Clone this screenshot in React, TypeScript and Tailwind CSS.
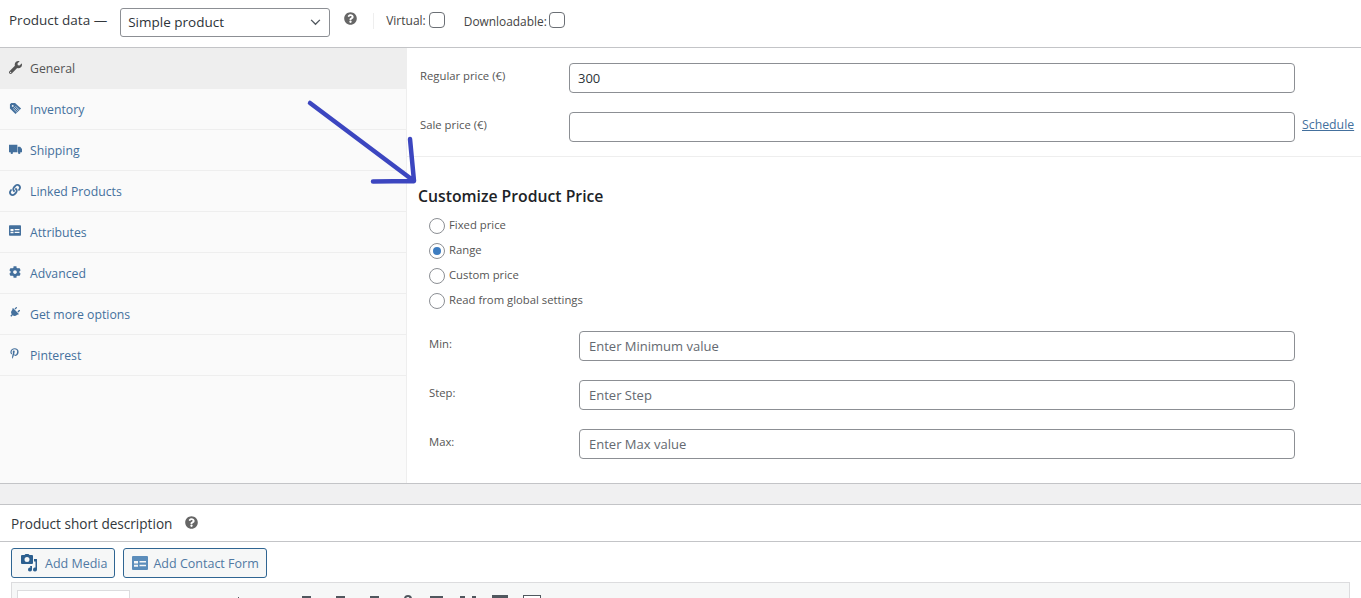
import type { ReactNode } from 'react'
import { FaWrench, FaLink, FaCog, FaPlug, FaPinterestP, FaQuestionCircle } from 'react-icons/fa'

const IdCard = ({ className = '' }: { className?: string }) => (
  <svg viewBox="0 0 16 14" className={className} fill="currentColor">
    <path fillRule="evenodd" d="M1 0h14a1 1 0 0 1 1 1v12a1 1 0 0 1-1 1H1a1 1 0 0 1-1-1V1a1 1 0 0 1 1-1zm1 3.500V12h12V3.500H2zM3 5h3.500v3H3V5zM8 5.300h5v1.400H8V5.300zM3 9.300h10v1.400H3V9.300z" />
  </svg>
)

// filled variant used by the form button and the Attributes tab
const FormIcon = ({ className = '' }: { className?: string }) => (
  <svg viewBox="0 0 16 14" className={className} fill="currentColor">
    <path fillRule="evenodd" d="M1 0h14a1 1 0 0 1 1 1v12a1 1 0 0 1-1 1H1a1 1 0 0 1-1-1V1a1 1 0 0 1 1-1zm1 5v2.500h4V5H2zm0 3.800v2h4v-2H2zM7.500 5v1.500H14V5H7.500zm0 3.800v1.500H14V8.800H7.500z" />
  </svg>
)

const TagIcon = ({ className = '' }: { className?: string }) => (
  <svg viewBox="0 0 14 14" className={className} fill="currentColor">
    <path fillRule="evenodd" d="M6.500 1L13 7l-6 6L1 7V2.500L2.500 1h4zM4 3.200a1 1 0 1 0 0 2 1 1 0 0 0 0-2z" />
    <path d="M5.500 5.500l4 4M7 4.500l4 4M4.500 7l4 4" stroke="#fafafa" strokeWidth="0.7" />
  </svg>
)

const TruckIcon = ({ className = '' }: { className?: string }) => (
  <svg viewBox="0 0 14 12" className={className} fill="currentColor">
    <path d="M0 1.500h9v8H0zM9.500 3.500h2.500l2 2.500v3.500H9.500z" />
    <circle cx="3" cy="10" r="1.300" />
    <circle cx="11" cy="10" r="1.300" />
  </svg>
)

const TABS: { label: string; icon: ReactNode; active?: boolean }[] = [
  { label: 'General', icon: <FaWrench className="w-[13px] h-[13px]" />, active: true },
  { label: 'Inventory', icon: <TagIcon className="w-[13px] h-[13px]" /> },
  { label: 'Shipping', icon: <TruckIcon className="w-[13px] h-[12px]" /> },
  { label: 'Linked Products', icon: <FaLink className="w-[12px] h-[12px]" /> },
  { label: 'Attributes', icon: <FormIcon className="w-[12px] h-[11px]" /> },
  { label: 'Advanced', icon: <FaCog className="w-[12px] h-[12px]" /> },
  { label: 'Get more options', icon: <FaPlug className="w-[11px] h-[11px] rotate-45" /> },
  { label: 'Pinterest', icon: <FaPinterestP className="w-[11px] h-[11px]" /> },
]

const RADIOS = ['Fixed price', 'Range', 'Custom price', 'Read from global settings']

function SideTab({ label, icon, active }: { label: string; icon: ReactNode; active?: boolean }) {
  return (
    <div
      className={`h-[41px] flex items-start border-b ${
        active ? 'bg-[#eeeeee] text-[#555555] border-[#eeeeee]' : 'text-[#44709d] border-[#eeeeee]'
      }`}
    >
      <span className="w-[30px] pl-[9px] pt-[13px] flex">{icon}</span>
      <span className="pt-[12px] text-[12.250px] leading-[17px]">{label}</span>
    </div>
  )
}

function PriceRow({ label, value, link }: { label: string; value?: string; link?: boolean }) {
  return (
    <div className="flex h-[30px] items-start">
      <span className="w-[149px] pt-[5px] text-[11.300px] leading-[16px] text-[#555555]">{label}</span>
      <div className="w-[726px] h-[30px] border border-[#8c8f94] rounded-[4px] px-2 pt-[1px] flex items-center text-[13px] text-[#2c3338]">
        {value}
      </div>
      {link && <a className="ml-[7px] pt-[4px] text-[12.300px] leading-[17px] text-[#44709d] underline">Schedule</a>}
    </div>
  )
}

function RangeRow({ label, placeholder }: { label: string; placeholder: string }) {
  return (
    <div className="flex h-[30px] items-start">
      <span className="w-[150px] pt-[5px] text-[11.300px] leading-[16px] text-[#555555]">{label}</span>
      <div className="w-[716px] h-[30px] border border-[#8c8f94] rounded-[4px] px-[9px] pt-[1px] flex items-center text-[13px] text-[#646970]">
        {placeholder}
      </div>
    </div>
  )
}

function Radio({ label, checked }: { label: string; checked?: boolean }) {
  return (
    <div className="h-[25px] flex items-start">
      <span className="w-4 h-4 mt-[1px] rounded-full border border-[#8c8f94] flex items-center justify-center">
        {checked && <span className="w-2 h-2 rounded-full bg-[#3d7cc0]" />}
      </span>
      <span className="ml-[4px] text-[11.300px] leading-[16px] text-[#555555]">{label}</span>
    </div>
  )
}

function AddButton({ icon, label }: { icon: ReactNode; label: string }) {
  return (
    <button className="h-[30px] flex items-center rounded-[3px] border border-[#2f6592] bg-[#f6f7f7] text-[12.500px] text-[#5079a3] pl-[8px] pr-[7px] pt-[2px]">
      {icon}
      {label}
    </button>
  )
}

export default function App() {
  return (
    <div className="relative h-[598px] overflow-hidden bg-white font-['Open_Sans',sans-serif]">
      {/* header */}
      <div className="h-[48px] flex items-start border-b border-[#c3c4c7]">
        <span className="ml-[9px] mt-[11px] text-[13.500px] leading-[18px] font-medium text-[#32373c]">Product data —</span>
        <div className="ml-[13px] mt-[8px] w-[210px] h-[29px] border border-[#8c8f94] rounded-[3px] pl-[7px] pr-[8px] flex items-center justify-between text-[13.500px] text-[#2c3338] font-medium">
          Simple product
          <svg viewBox="0 0 12 8" className="w-[11px] h-[7px] text-[#50575e]" fill="none" stroke="currentColor" strokeWidth="1.500">
            <path d="M1 1l5 5 5-5" />
          </svg>
        </div>
        <FaQuestionCircle className="ml-[14px] mt-[12px] w-[13px] h-[13px] text-[#666666]" />
        <div className="ml-[16px] mt-[13px] h-[16px] border-l border-[#eeeeee]" />
        <span className="ml-[12px] mt-[13px] text-[12px] leading-[16px] text-[#444444]">Virtual:</span>
        <span className="ml-[3px] mt-[12px] w-4 h-4 border border-[#6b6f75] rounded-[4px]" />
        <span className="ml-[19px] mt-[13px] text-[11.900px] leading-[16px] text-[#444444]">Downloadable:</span>
        <span className="ml-[2px] mt-[12px] w-4 h-4 border border-[#6b6f75] rounded-[4px]" />
      </div>

      {/* product data body */}
      <div className="h-[436px] flex border-b border-[#c3c4c7]">
        <div className="w-[407px] shrink-0 bg-[#fafafa] border-r border-[#eeeeee]">
          {TABS.map(t => (
            <SideTab key={t.label} {...t} />
          ))}
        </div>
        <div className="flex-1">
          <div className="h-[109px] border-b border-[#eeeeee] pl-[13px] pt-[15px] flex flex-col gap-[19px]">
            <PriceRow label="Regular price (€)" value="300" />
            <PriceRow label="Sale price (€)" link />
          </div>
          <h3 className="ml-[11px] mt-[28px] text-[15.750px] leading-[22px] font-semibold text-[#1d2327]">Customize Product Price</h3>
          <div className="ml-[22px] mt-[10px]">
            {RADIOS.map(r => (
              <Radio key={r} label={r} checked={r === 'Range'} />
            ))}
          </div>
          <div className="ml-[22px] mt-[14px] flex flex-col gap-[19px]">
            <RangeRow label="Min:" placeholder="Enter Minimum value" />
            <RangeRow label="Step:" placeholder="Enter Step" />
            <RangeRow label="Max:" placeholder="Enter Max value" />
          </div>
        </div>
      </div>

      <div className="h-[21px] bg-[#f0f0f1] border-b border-[#c3c4c7]" />

      {/* short description */}
      <div className="h-[37px] flex items-start border-b border-[#c3c4c7]">
        <span className="ml-[11px] mt-[10px] text-[13.600px] leading-[18px] font-medium text-[#32373c]">Product short description</span>
        <FaQuestionCircle className="ml-[13px] mt-[11px] w-[13px] h-[13px] text-[#666666]" />
      </div>
      <div className="ml-[11px] mt-[6px] flex gap-2">
        <AddButton
          label="Add Media"
          icon={
            <svg viewBox="0 0 18 18" className="w-[18px] h-[18px] mr-[7px] -mt-[2px] text-[#2c5f8f]" fill="currentColor">
              <path fillRule="evenodd" d="M2 1h2.500l1-1h3l1 1H12a1 1 0 0 1 1 1v7a1 1 0 0 1-1 1H2a1 1 0 0 1-1-1V2a1 1 0 0 1 1-1zm5 2a2.500 2.500 0 1 0 0 5 2.500 2.500 0 0 0 0-5z" />
              <path d="M14 5h3v10.500a2 2 0 1 1-1.500-1.900V7.500H14V5zM10 12h2v3.500a2 2 0 1 1-1.500-1.900L10 12z" />
            </svg>
          }
        />
        <AddButton label="Add Contact Form" icon={<FormIcon className="w-[16px] h-[14px] mr-[5px] -mt-[2px] text-[#5b8dbb]" />} />
      </div>

      {/* editor toolbar, cut off by the window */}
      <div className="ml-[11px] mt-[4px] mr-[11px] h-[40px] bg-[#f6f7f7] border border-[#dcdcde] pl-[5px] pt-[7px] flex items-start">
        <div className="w-[113px] h-[30px] bg-white border border-[#dcdcde]" />
        <div className="relative">
          <span className="absolute left-[108px] top-[7px] w-[1px] h-[3px] bg-[#50575e]" />
          <span className="absolute left-[172px] top-[6px] w-[9px] h-[2px] bg-[#50575e]" />
          <span className="absolute left-[206px] top-[6px] w-[9px] h-[2px] bg-[#50575e]" />
          <span className="absolute left-[240px] top-[6px] w-[9px] h-[2px] bg-[#50575e]" />
          <span className="absolute left-[274px] top-[5px] w-[8px] h-[4px] rounded-t-full border-t-2 border-x-2 border-[#50575e]" />
          <span className="absolute left-[300px] top-[6px] w-[13px] h-[2px] bg-[#50575e]" />
          <span className="absolute left-[330px] top-[6px] w-[5px] h-[2px] bg-[#50575e]" />
          <span className="absolute left-[342px] top-[6px] w-[4px] h-[2px] bg-[#50575e]" />
          <span className="absolute left-[362px] top-[5px] w-[16px] h-[6px] bg-[#50575e]" />
          <span className="absolute left-[393px] top-[5px] w-[18px] h-[6px] border border-[#50575e] bg-white" />
        </div>
      </div>

      {/* hand drawn arrow over the page */}
      <svg className="absolute left-0 top-0 w-[1361px] h-[598px] pointer-events-none" viewBox="0 0 1361 598" fill="none">
        <path
          d="M310 103L414 181M410 139L414 181L373 181.500"
          stroke="#3c46c0"
          strokeWidth="4.500"
          strokeLinecap="round"
          strokeLinejoin="round"
        />
      </svg>
    </div>
  )
}
